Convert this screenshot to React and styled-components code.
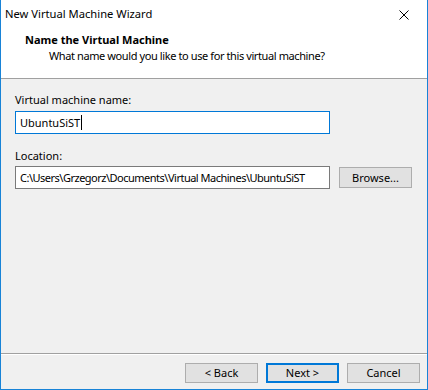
import React from "react";
import styled, { createGlobalStyle } from "styled-components";

const GlobalStyle = createGlobalStyle`
  html, body {
    margin: 0;
    padding: 0;
    background: #ffffff;
  }
  * {
    box-sizing: border-box;
  }
`;

const Window = styled.div`
  display: flex;
  flex-direction: column;
  width: 428px;
  height: 390px;
  border: 1px solid #1883d7;
  border-top: none;
  background: #f0f0f0;
  font-family: "Noto Sans", "Liberation Sans", sans-serif;
  font-size: 11px;
  color: #000;
`;

const TitleBar = styled.div`
  display: flex;
  align-items: center;
  justify-content: space-between;
  height: 30px;
  padding: 0 0 2px 4px;
  background: #fff;
  font-size: 11.2px;
`;

const Title = styled.span`
  line-height: 16px;
`;

const CloseButton = styled.div`
  display: flex;
  align-items: center;
  justify-content: center;
  width: 46px;
  height: 28px;
  margin-top: 1px;
`;

const Header = styled.div`
  display: flex;
  flex-direction: column;
  height: 49px;
  padding: 2px 0 0 24px;
  background: #fff;
  border-bottom: 1px solid #a0a0a0;
`;

const HeaderTitle = styled.div`
  font-weight: 700;
  line-height: 16px;
`;

const HeaderSubtitle = styled.div`
  line-height: 16px;
  padding-left: 24px;
  letter-spacing: -0.4px;
`;

const Body = styled.div`
  flex: 1;
  display: flex;
  flex-direction: column;
  padding: 13px 0 0 14px;
`;

const Label = styled.div`
  line-height: 16px;
  margin-top: ${(p) => p.$top || 0}px;
`;

const Row = styled.div`
  display: flex;
  align-items: center;
  gap: 9px;
  margin-top: ${(p) => p.$top || 0}px;
`;

const TextBox = styled.div`
  display: flex;
  align-items: center;
  width: 315px;
  height: 23px;
  padding-left: 4px;
  overflow: hidden;
  background: #fff;
  border: 1px solid ${(p) => (p.$focused ? "#0078d7" : "#7a7a7a")};
  line-height: 16px;
  white-space: nowrap;
  letter-spacing: ${(p) => p.$tight ? "-0.5px" : "0"};
`;

const Caret = styled.span`
  display: inline-block;
  width: 1px;
  height: 15px;
  margin-left: 1px;
  background: #000;
`;

const Button = styled.div`
  display: flex;
  align-items: center;
  justify-content: center;
  width: 73px;
  height: ${(p) => p.$height || 20}px;
  background: #e1e1e1;
  border: ${(p) => (p.$default ? "2px solid #0078d7" : "1px solid #adadad")};
  line-height: 16px;
`;

const Footer = styled.div`
  display: flex;
  justify-content: flex-end;
  gap: 8px;
  height: 36px;
  padding: 9px 7px 0 0;
  border-top: 1px solid #a0a0a0;
  box-shadow: inset 0 1px 0 #ffffff;
`;

export default function App() {
  return (
    <>
      <GlobalStyle />
      <Window>
        <TitleBar>
          <Title>New Virtual Machine Wizard</Title>
          <CloseButton>
            <svg width="10" height="10" viewBox="0 0 10 10">
              <path d="M0.5 0.5 L9.5 9.5 M9.5 0.5 L0.5 9.5" stroke="#000" strokeWidth="1" />
            </svg>
          </CloseButton>
        </TitleBar>
        <Header>
          <HeaderTitle>Name the Virtual Machine</HeaderTitle>
          <HeaderSubtitle>What name would you like to use for this virtual machine?</HeaderSubtitle>
        </Header>
        <Body>
          <Label>Virtual machine name:</Label>
          <Row $top={3}>
            <TextBox $focused>
              UbuntuSiST
              <Caret />
            </TextBox>
          </Row>
          <Label $top={14}>Location:</Label>
          <Row $top={2}>
            <TextBox $tight>C:\Users\Grzegorz\Documents\Virtual Machines\UbuntuSiST</TextBox>
            <Button $height={21}>Browse...</Button>
          </Row>
        </Body>
        <Footer>
          <Button>&lt; Back</Button>
          <Button $default>Next &gt;</Button>
          <Button>Cancel</Button>
        </Footer>
      </Window>
    </>
  );
}
